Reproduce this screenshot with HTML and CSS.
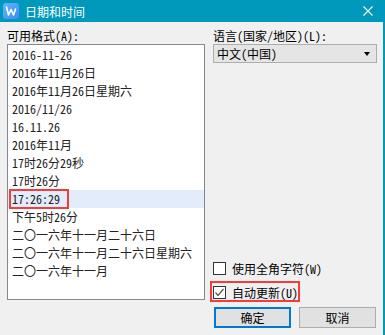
FILE: index.html
```html
<!DOCTYPE html>
<html>

<head>
    <title>日期和时间</title>
    <link rel="stylesheet" href="styles.css">
</head>

<body>
    <div class="dialog">
        <div class="titlebar">
            <svg class="app-icon" width="16" height="16" viewBox="0 0 16 16">
                <defs>
                    <linearGradient id="iconGrad" x1="0" y1="0" x2="1" y2="1">
                        <stop offset="0" stop-color="#62b6ff" />
                        <stop offset="1" stop-color="#3a8cf2" />
                    </linearGradient>
                </defs>
                <rect x="0" y="0" width="16" height="16" rx="3" fill="url(#iconGrad)" />
                <polyline points="3.5,4 5.5,12 8,6.5 10.5,12 12.5,6" fill="none" stroke="#fff" stroke-width="1.6" stroke-linejoin="round" stroke-linecap="round" />
            </svg>
            <span class="title">日期和时间</span>
            <svg class="close" width="10" height="10" viewBox="0 0 10 10">
                <path d="M0.5 0.5 L9.5 9.5 M9.5 0.5 L0.5 9.5" stroke="#fff" stroke-width="1.2" />
            </svg>
        </div>

        <div class="content">
            <div class="col-left">
                <div class="label">可用格式(A):</div>
                <ul class="format-list">
                    <li>2016-11-26</li>
                    <li>2016年11月26日</li>
                    <li>2016年11月26日星期六</li>
                    <li>2016/11/26</li>
                    <li>16.11.26</li>
                    <li>2016年11月</li>
                    <li>17时26分29秒</li>
                    <li>17时26分</li>
                    <li class="selected">17:26:29</li>
                    <li>下午5时26分</li>
                    <li>二〇一六年十一月二十六日</li>
                    <li>二〇一六年十一月二十六日星期六</li>
                    <li>二〇一六年十一月</li>
                </ul>
            </div>

            <div class="col-right">
                <div class="label">语言(国家/地区)(L):</div>
                <div class="select">
                    <span>中文(中国)</span>
                    <span class="arrow"></span>
                </div>

                <div class="options">
                    <div class="check">
                        <span class="box"></span>
                        <span>使用全角字符(W)</span>
                    </div>
                    <div class="check marked">
                        <span class="box">
                            <svg width="11" height="11" viewBox="0 0 11 11">
                                <polyline points="1.5,5.5 4,8.5 9.5,2" fill="none" stroke="#555" stroke-width="1.2" />
                            </svg>
                        </span>
                        <span>自动更新(U)</span>
                    </div>
                </div>

                <div class="buttons">
                    <button class="btn primary">确定</button>
                    <button class="btn">取消</button>
                </div>
            </div>
        </div>
    </div>
</body>

</html>
```

FILE: styles.css
```css
body {
    margin: 0;
    background-color: #f0f0f0;
    font-family: "Noto Sans Mono CJK SC", "Noto Sans CJK SC", monospace;
    font-size: 12px;
    color: #000;
}

.dialog {
    width: 385px;
    height: 335px;
    box-sizing: border-box;
    border-right: 2px solid #0099bb;
    display: flex;
    flex-direction: column;
    background-color: #f0f0f0;
}

.titlebar {
    height: 22px;
    flex: none;
    display: flex;
    align-items: center;
    padding-left: 3px;
    padding-right: 10px;
    margin-right: -2px;
    background-color: #0099bb;
}

.app-icon {
    flex: none;
}

.title {
    margin-left: 6px;
    color: #fff;
    font-family: "Noto Sans CJK SC", sans-serif;
    font-size: 12px;
    flex: 1;
}

.close {
    flex: none;
    margin-right: 2px;
}

.content {
    flex: 1;
    display: grid;
    grid-template-columns: 198px 1fr;
    column-gap: 8px;
    padding: 6px 6px 7px 7px;
}

.label {
    height: 16px;
    line-height: 16px;
}

.format-list {
    list-style: none;
    margin: 0;
    padding: 1px 0 0 0;
    height: 256px;
    box-sizing: border-box;
    border: 1px solid #828790;
    background-color: #fff;
}

.format-list li {
    height: 18px;
    line-height: 18px;
    padding-left: 4px;
    white-space: nowrap;
    color: #222;
}

.format-list li.selected {
    position: relative;
    background-color: #e3ecfb;
}

.format-list li.selected::after {
    content: "";
    position: absolute;
    left: 1px;
    top: -1px;
    width: 60px;
    height: 20px;
    box-sizing: border-box;
    border: 2px solid #f53b3b;
}

.col-right {
    display: flex;
    flex-direction: column;
}

.select {
    height: 19px;
    box-sizing: border-box;
    border: 1px solid #adadad;
    background-color: #e5e5e5;
    display: flex;
    align-items: center;
    justify-content: space-between;
    padding: 0 6px 0 3px;
}

.arrow {
    width: 0;
    height: 0;
    border-left: 3.5px solid transparent;
    border-right: 3.5px solid transparent;
    border-top: 4px solid #000;
}

.options {
    margin-top: auto;
}

.check {
    height: 24px;
    display: flex;
    align-items: center;
    gap: 6px;
}

.check.marked {
    position: relative;
}

.check.marked::after {
    content: "";
    position: absolute;
    left: -3px;
    top: 1px;
    width: 90px;
    height: 21px;
    box-sizing: border-box;
    border: 2px solid #f53b3b;
}

.box {
    width: 13px;
    height: 13px;
    box-sizing: border-box;
    border: 1px solid #333;
    background-color: #fff;
    display: flex;
    align-items: center;
    justify-content: center;
}

.buttons {
    display: flex;
    gap: 8px;
    padding: 0 1px;
    margin-top: 3px;
}

.btn {
    width: 77px;
    height: 21px;
    box-sizing: border-box;
    border: 1px solid #adadad;
    background-color: #e1e1e1;
    font-family: "Noto Sans CJK SC", sans-serif;
    font-size: 12px;
    color: #000;
    padding: 0;
}

.btn.primary {
    border: 2px solid #0078d7;
}
```
